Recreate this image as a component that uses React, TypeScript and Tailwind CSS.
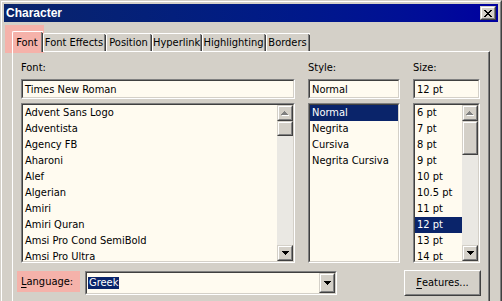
import React from "react";

function Sunken({ className = "", children }: { className?: string; children?: React.ReactNode }) {
  return (
    <div className={`border border-t-[#808080] border-l-[#808080] border-b-white border-r-white ${className}`}>
      <div className="h-full w-full border border-t-[#404040] border-l-[#404040] border-b-[#d4d0c8] border-r-[#d4d0c8] bg-[#fffbf0] overflow-hidden">
        {children}
      </div>
    </div>
  );
}

function Raised({ className = "", children }: { className?: string; children?: React.ReactNode }) {
  return (
    <div className={`border border-t-[#d4d0c8] border-l-[#d4d0c8] border-b-[#404040] border-r-[#404040] bg-[#d4d0c8] ${className}`}>
      <div className="h-full w-full border border-t-white border-l-white border-b-[#808080] border-r-[#808080] flex items-center justify-center">
        {children}
      </div>
    </div>
  );
}

function UpArrow() {
  return (
    <svg width="8" height="5" viewBox="0 0 8 5" shapeRendering="crispEdges">
      <rect x="4" y="1" width="1" height="1" fill="#fff" />
      <rect x="3" y="2" width="3" height="1" fill="#fff" />
      <rect x="2" y="3" width="5" height="1" fill="#fff" />
      <rect x="1" y="4" width="7" height="1" fill="#fff" />
      <rect x="3" y="0" width="1" height="1" fill="#808080" />
      <rect x="2" y="1" width="3" height="1" fill="#808080" />
      <rect x="1" y="2" width="5" height="1" fill="#808080" />
      <rect x="0" y="3" width="7" height="1" fill="#808080" />
    </svg>
  );
}

function DownArrow() {
  return (
    <svg width="7" height="4" viewBox="0 0 7 4" shapeRendering="crispEdges">
      <rect x="0" y="0" width="7" height="1" fill="#000" />
      <rect x="1" y="1" width="5" height="1" fill="#000" />
      <rect x="2" y="2" width="3" height="1" fill="#000" />
      <rect x="3" y="3" width="1" height="1" fill="#000" />
    </svg>
  );
}

function ScrollBar({ thumb }: { thumb: string }) {
  return (
    <div className="w-[16px] h-full shrink-0 flex flex-col bg-[#eae8e3]">
      <Raised className="w-[16px] h-[16px] shrink-0">
        <UpArrow />
      </Raised>
      <Raised className={`w-[16px] shrink-0 ${thumb}`} />
      <div className="flex-1" />
      <Raised className="w-[16px] h-[16px] shrink-0">
        <DownArrow />
      </Raised>
    </div>
  );
}

function Row({ text, selected = false }: { text: string; selected?: boolean }) {
  return (
    <div
      className={`h-[16px] leading-[16px] pl-[2px] whitespace-nowrap ${
        selected ? "bg-[#0a246a] text-white" : "text-black"
      }`}
    >
      {text}
    </div>
  );
}

const fonts = [
  "Advent Sans Logo",
  "Adventista",
  "Agency FB",
  "Aharoni",
  "Alef",
  "Algerian",
  "Amiri",
  "Amiri Quran",
  "Amsi Pro Cond SemiBold",
  "Amsi Pro Ultra",
];
const styles = ["Normal", "Negrita", "Cursiva", "Negrita Cursiva"];
const sizes = ["6 pt", "7 pt", "8 pt", "9 pt", "10 pt", "10.5 pt", "11 pt", "12 pt", "13 pt", "14 pt"];

function Tab({ label, w }: { label: string; w: string }) {
  return (
    <div
      className={`${w} h-[18px] shrink-0 bg-[#d4d0c8] border-l border-t border-l-white border-t-white rounded-tl-[2px] flex`}
    >
      <div className="flex-1 border-r border-r-[#808080] flex justify-center pt-[2px] leading-[14px] whitespace-nowrap">
        {label}
      </div>
      <div className="w-[1px] mt-[1px] bg-[#404040]" />
    </div>
  );
}

export default function App() {
  return (
    <div className="w-[502px] h-[301px] overflow-hidden relative isolate bg-[#d4d0c8] text-[11px] text-black font-['DejaVu_Sans_Condensed','DejaVu_Sans',sans-serif] border-t border-l border-r border-t-[#d4d0c8] border-l-[#d4d0c8] border-r-[#404040]">
      <div className="absolute left-[4px] top-[24px] w-[39px] h-[28px] bg-[#f5b2aa] -z-10" />
      <div className="h-full flex flex-col border-t border-l border-r border-t-white border-l-white border-r-[#808080] pt-[2px] px-[2px]">
        {/* Title bar */}
        <div className="h-[18px] shrink-0 flex items-start bg-gradient-to-r from-[#0a246a] to-[#0000a0]">
          <div className="pl-[2px] leading-[18px] text-[12px] font-bold text-white font-['Liberation_Sans',Arial,sans-serif]">
            Character
          </div>
          <div className="flex-1" />
          <Raised className="w-[16px] h-[14px] mt-[2px] mr-[2px]">
            <svg width="8" height="7" viewBox="0 0 8 7" shapeRendering="crispEdges">
              <path d="M0 0h2v1h1v1h2V1h1V0h2v1H7v1H6v1H5v1h1v1h1v1h1v1H6V6H5V5H3v1H2v1H0V6h1V5h1V4h1V3H2V2H1V1H0z" fill="#000" />
            </svg>
          </Raised>
        </div>

        {/* Body */}
        <div className="flex-1 flex flex-col px-[8px]">
          {/* Tabs */}
          <div className="h-[20px] mt-[9px] shrink-0 flex items-end">
            <div className="w-[31px] h-[21px] -mb-px relative bg-[#f5b2aa] border-l border-t border-l-white border-t-white rounded-tl-[2px] flex shrink-0">
              <div className="flex-1 border-r border-r-[#808080] flex justify-center pt-[4px] leading-[14px]">Font</div>
              <div className="w-[1px] mt-[1px] bg-[#404040]" />
            </div>
            <Tab label="Font Effects" w="w-[63px]" />
            <Tab label="Position" w="w-[46px]" />
            <Tab label="Hyperlink" w="w-[50px]" />
            <Tab label="Highlighting" w="w-[64px]" />
            <Tab label="Borders" w="w-[44px]" />
          </div>

          {/* Panel */}
          <div className="flex-1 border-l border-t border-r border-l-white border-t-white border-r-[#404040]">
            <div className="h-full border-r border-r-[#808080] pl-[8px] pt-[9px]">
              <div className="flex gap-[13px]">
                {/* Font column */}
                <div className="w-[274px] flex flex-col">
                  <div className="h-[14px] leading-[14px]">Font:</div>
                  <Sunken className="mt-[4px] h-[20px]">
                    <div className="leading-[18px] pl-[2px] whitespace-nowrap">Times New Roman</div>
                  </Sunken>
                  <Sunken className="mt-[4px] h-[160px]">
                    <div className="h-full flex">
                      <div className="flex-1 overflow-hidden">
                        {fonts.map((f) => (
                          <Row key={f} text={f} />
                        ))}
                      </div>
                      <ScrollBar thumb="h-[15px]" />
                    </div>
                  </Sunken>
                </div>

                {/* Style column */}
                <div className="w-[92px] flex flex-col">
                  <div className="h-[14px] leading-[14px]">Style:</div>
                  <Sunken className="mt-[4px] h-[20px]">
                    <div className="leading-[18px] pl-[2px] whitespace-nowrap">Normal</div>
                  </Sunken>
                  <Sunken className="mt-[4px] h-[160px]">
                    {styles.map((s, i) => (
                      <Row key={s} text={s} selected={i === 0} />
                    ))}
                  </Sunken>
                </div>

                {/* Size column */}
                <div className="w-[67px] flex flex-col">
                  <div className="h-[14px] leading-[14px]">Size:</div>
                  <Sunken className="mt-[4px] h-[20px]">
                    <div className="leading-[18px] pl-[2px] whitespace-nowrap">12 pt</div>
                  </Sunken>
                  <Sunken className="mt-[4px] h-[160px]">
                    <div className="h-full flex">
                      <div className="flex-1 overflow-hidden">
                        {sizes.map((s) => (
                          <Row key={s} text={s} selected={s === "12 pt"} />
                        ))}
                      </div>
                      <ScrollBar thumb="h-[34px]" />
                    </div>
                  </Sunken>
                </div>
              </div>

              {/* Bottom row */}
              <div className="mt-[7px] flex items-start">
                <div className="-ml-[4px] mt-[1px] w-[63px] h-[21px] bg-[#f5b2aa] pl-[4px] pt-[4px] leading-[14px] whitespace-nowrap">
                  <span className="underline underline-offset-[2px]">L</span>anguage:
                </div>
                <Sunken className="ml-[5px] mt-[1px] w-[252px] h-[24px]">
                  <div className="h-full flex items-start">
                    <span className="ml-[1px] mt-[4px] h-[12px] leading-[12px] px-[1px] bg-[#0a246a] text-white">Greek</span>
                    <div className="flex-1" />
                    <Raised className="w-[16px] h-[20px]">
                      <DownArrow />
                    </Raised>
                  </div>
                </Sunken>
                <div className="ml-[67px] w-[77px] h-[26px] border border-t-white border-l-white border-b-[#404040] border-r-[#404040] bg-[#d4d0c8]">
                  <div className="h-full border border-t-[#d4d0c8] border-l-[#d4d0c8] border-b-[#808080] border-r-[#808080] flex items-center justify-center leading-[14px] whitespace-nowrap">
                    <span className="underline underline-offset-[2px]">F</span>eatures...
                  </div>
                </div>
              </div>
            </div>
          </div>
        </div>
      </div>
    </div>
  );
}
